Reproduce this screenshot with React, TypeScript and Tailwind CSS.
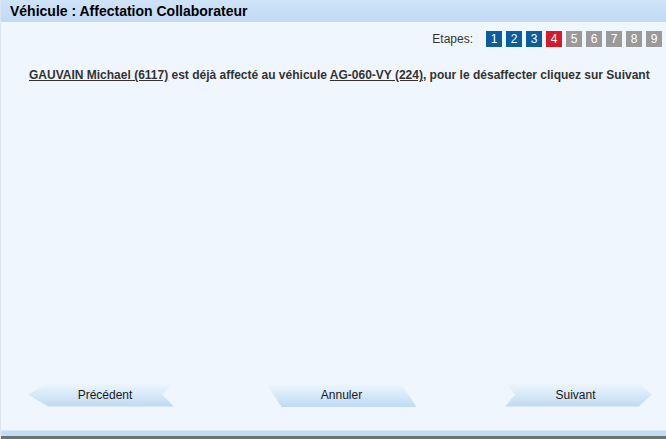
const steps = [
  { n: 1, state: "done" },
  { n: 2, state: "done" },
  { n: 3, state: "done" },
  { n: 4, state: "current" },
  { n: 5, state: "todo" },
  { n: 6, state: "todo" },
  { n: 7, state: "todo" },
  { n: 8, state: "todo" },
  { n: 9, state: "todo" },
];

const stepColor: Record<string, string> = {
  done: "bg-[#0b5d9e]",
  current: "bg-[#d51a2c]",
  todo: "bg-[#9a9a9a]",
};

export default function App() {
  return (
    <div className="w-[666px] h-[439px] flex flex-col bg-[#f0f6fe] font-['Liberation_Sans',Arial,sans-serif] overflow-hidden border-l border-[#dde6f0]">
      {/* title */}
      <div className="h-[22px] shrink-0 bg-gradient-to-b from-[#cfe3f8] to-[#c1daf4] pl-[9px] flex items-center">
        <h1 className="text-[14px] font-bold text-black leading-none">Véhicule : Affectation Collaborateur</h1>
      </div>

      <div className="flex-1 flex flex-col">
        {/* etapes */}
        <div className="flex justify-end items-center gap-[13px] pt-[8px] pr-[4px]">
          <span className="text-[12px] text-[#333]">Etapes:</span>
          <div className="flex gap-[4px]">
            {steps.map((s) => (
              <div
                key={s.n}
                className={`w-[16px] h-[16px] flex items-center justify-center text-[12px] text-white leading-none ${stepColor[s.state]}`}
              >
                {s.n}
              </div>
            ))}
          </div>
        </div>

        {/* message */}
        <p className="mt-[18px] pl-[28px] text-[12px] font-bold text-[#333] whitespace-nowrap">
          <span className="underline">GAUVAIN Michael (6117)</span> est déjà affecté au véhicule{" "}
          <span className="underline">AG-060-VY (224)</span>, pour le désaffecter cliquez sur Suivant
        </p>

        <div className="flex-1" />

        {/* actions */}
        <div className="flex items-center pl-[27px] pr-[14px] pb-[23px]">
          <button className="w-[146px] h-[24px] pl-[8px] text-[12px] text-[#1a1a1a] bg-gradient-to-b from-[#eef6fe] to-[#bfdaf4] [clip-path:polygon(0_50%,14%_0,100%_0,92%_50%,100%_100%,14%_100%)]">
            Précédent
          </button>
          <div className="flex-1 flex justify-center pl-[4px]">
            <button className="w-[150px] h-[23px] mt-[2px] pb-[2px] text-[12px] text-[#1a1a1a] bg-gradient-to-b from-[#eef6fe] to-[#bfdaf4] [clip-path:polygon(0_0,90%_0,100%_100%,10%_100%)]">
              Annuler
            </button>
          </div>
          <button className="w-[147px] h-[24px] pr-[6px] text-[12px] text-[#1a1a1a] bg-gradient-to-b from-[#eef6fe] to-[#bfdaf4] [clip-path:polygon(0_0,91%_0,100%_50%,91%_100%,0_100%,7%_50%)]">
            Suivant
          </button>
        </div>
      </div>

      {/* footer */}
      <div className="h-[6px] shrink-0 bg-[#c3ddf5] border-t border-[#d6e8f9]" />
      <div className="h-[3px] shrink-0 bg-[#6f7274]" />
    </div>
  );
}
